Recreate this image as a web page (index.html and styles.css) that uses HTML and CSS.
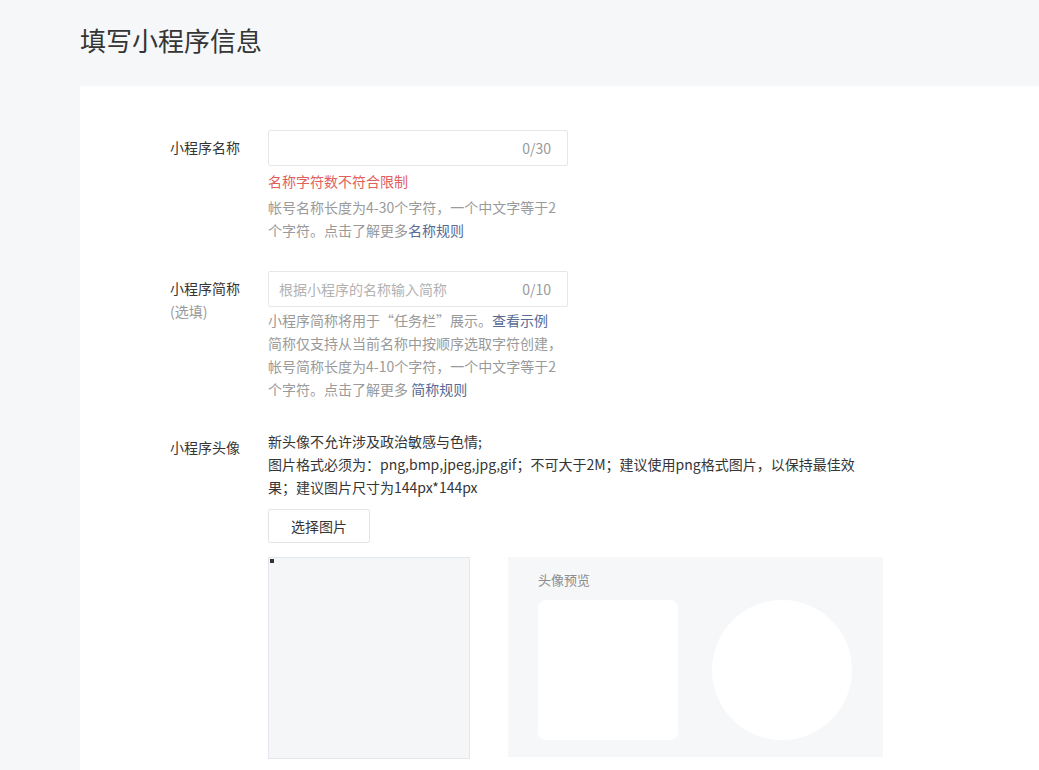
FILE: index.html
```html
<!DOCTYPE html>
<html lang="zh-CN">
<head>
    <meta charset="UTF-8">
    <title>填写小程序信息</title>
    <link rel="stylesheet" href="styles.css">
</head>
<body>
    <div class="page-header">
        <h1>填写小程序信息</h1>
    </div>

    <div class="form-card">
        <!-- 名称 -->
        <div class="form-row">
            <div class="form-label">小程序名称</div>
            <div class="form-control">
                <div class="input-box">
                    <input type="text" class="input-text">
                    <span class="input-count">0/30</span>
                </div>
                <div class="form-error">名称字符数不符合限制</div>
                <div class="form-tips">帐号名称长度为4-30个字符，一个中文字等于2个字符。点击了解更多<a href="#">名称规则</a></div>
            </div>
        </div>

        <!-- 简称 -->
        <div class="form-row">
            <div class="form-label">小程序简称<span class="label-sub">(选填)</span></div>
            <div class="form-control">
                <div class="input-box">
                    <input type="text" class="input-text" placeholder="根据小程序的名称输入简称">
                    <span class="input-count">0/10</span>
                </div>
                <div class="form-tips form-tips-first">小程序简称将用于“任务栏”展示。<a href="#">查看示例</a><br>简称仅支持从当前名称中按顺序选取字符创建，帐号简称长度为4-10个字符，一个中文字等于2个字符。点击了解更多 <a href="#">简称规则</a></div>
            </div>
        </div>

        <!-- 头像 -->
        <div class="form-row">
            <div class="form-label">小程序头像</div>
            <div class="form-control form-control-wide">
                <div class="avatar-desc">新头像不允许涉及政治敏感与色情;<br>图片格式必须为：png,bmp,jpeg,jpg,gif；不可大于2M；建议使用png格式图片，以保持最佳效果；建议图片尺寸为144px*144px</div>
                <button class="btn-select">选择图片</button>
                <div class="avatar-area">
                    <div class="crop-box"><span class="crop-handle"></span></div>
                    <div class="preview-box">
                        <div class="preview-title">头像预览</div>
                        <div class="preview-items">
                            <div class="preview-square"></div>
                            <div class="preview-circle"></div>
                        </div>
                    </div>
                </div>
            </div>
        </div>
    </div>
</body>
</html>
```

FILE: styles.css
```css
body {
    margin: 0;
    background-color: #f6f7f9;
    font-family: "Noto Sans CJK SC", "Liberation Sans", sans-serif;
    font-size: 14px;
    color: #353535;
}
.page-header {
    height: 86px;
    padding-left: 80px;
    box-sizing: border-box;
}
.page-header h1 {
    margin: 0;
    padding-top: 22px;
    font-size: 26px;
    font-weight: normal;
    line-height: 36px;
    color: #353535;
}
.form-card {
    margin-left: 80px;
    background: #fff;
    padding: 44px 0 40px 90px;
    min-height: 700px;
}
.form-row {
    display: flex;
    margin-bottom: 29px;
}
.form-label {
    width: 98px;
    flex-shrink: 0;
    padding-top: 6px;
    line-height: 23px;
}
.label-sub {
    display: block;
    color: #9a9a9a;
}
.form-control {
    width: 300px;
}
.form-control-wide {
    width: 620px;
}
.input-box {
    display: flex;
    align-items: center;
    height: 36px;
    border: 1px solid #e7e7eb;
    border-radius: 2px;
    box-sizing: border-box;
    padding: 0 16px 0 10px;
}
.input-text {
    flex: 1;
    border: none;
    outline: none;
    font-family: inherit;
    font-size: 14px;
    color: #353535;
    padding: 0;
    min-width: 0;
}
.input-text::placeholder {
    color: #b2b2b2;
}
.input-count {
    color: #9a9a9a;
    font-size: 14px;
}
.form-error {
    margin-top: 4px;
    margin-bottom: 3px;
    line-height: 23px;
    color: #e0605a;
}
.form-tips {
    line-height: 23px;
    color: #9a9a9a;
}
.form-tips-first {
    margin-top: 2px;
}
.form-tips a {
    color: #576b95;
    text-decoration: none;
}
.avatar-desc {
    max-width: 600px;
    line-height: 23px;
}
.btn-select {
    display: block;
    margin-top: 10px;
    width: 102px;
    height: 34px;
    background: #fff;
    border: 1px solid #e4e4e8;
    border-radius: 2px;
    font-family: inherit;
    font-size: 14px;
    color: #353535;
    cursor: pointer;
}
.avatar-area {
    display: flex;
    margin-top: 14px;
    gap: 38px;
}
.crop-box {
    position: relative;
    flex-shrink: 0;
    width: 202px;
    height: 202px;
    box-sizing: border-box;
    background: #f4f6f8;
    border: 1px solid #e3e6ea;
}
.crop-handle {
    position: absolute;
    top: 1px;
    left: 1px;
    width: 4px;
    height: 4px;
    background: #333;
}
.preview-box {
    flex-shrink: 0;
    width: 375px;
    height: 200px;
    box-sizing: border-box;
    background: #f6f7f9;
    padding: 14px 31px 0 30px;
}
.preview-title {
    font-size: 13px;
    line-height: 18px;
    color: #8c8c8c;
    margin-bottom: 11px;
}
.preview-items {
    display: flex;
    gap: 34px;
}
.preview-square {
    width: 140px;
    height: 140px;
    background: #fff;
    border-radius: 8px;
}
.preview-circle {
    width: 140px;
    height: 140px;
    background: #fff;
    border-radius: 50%;
}
```
